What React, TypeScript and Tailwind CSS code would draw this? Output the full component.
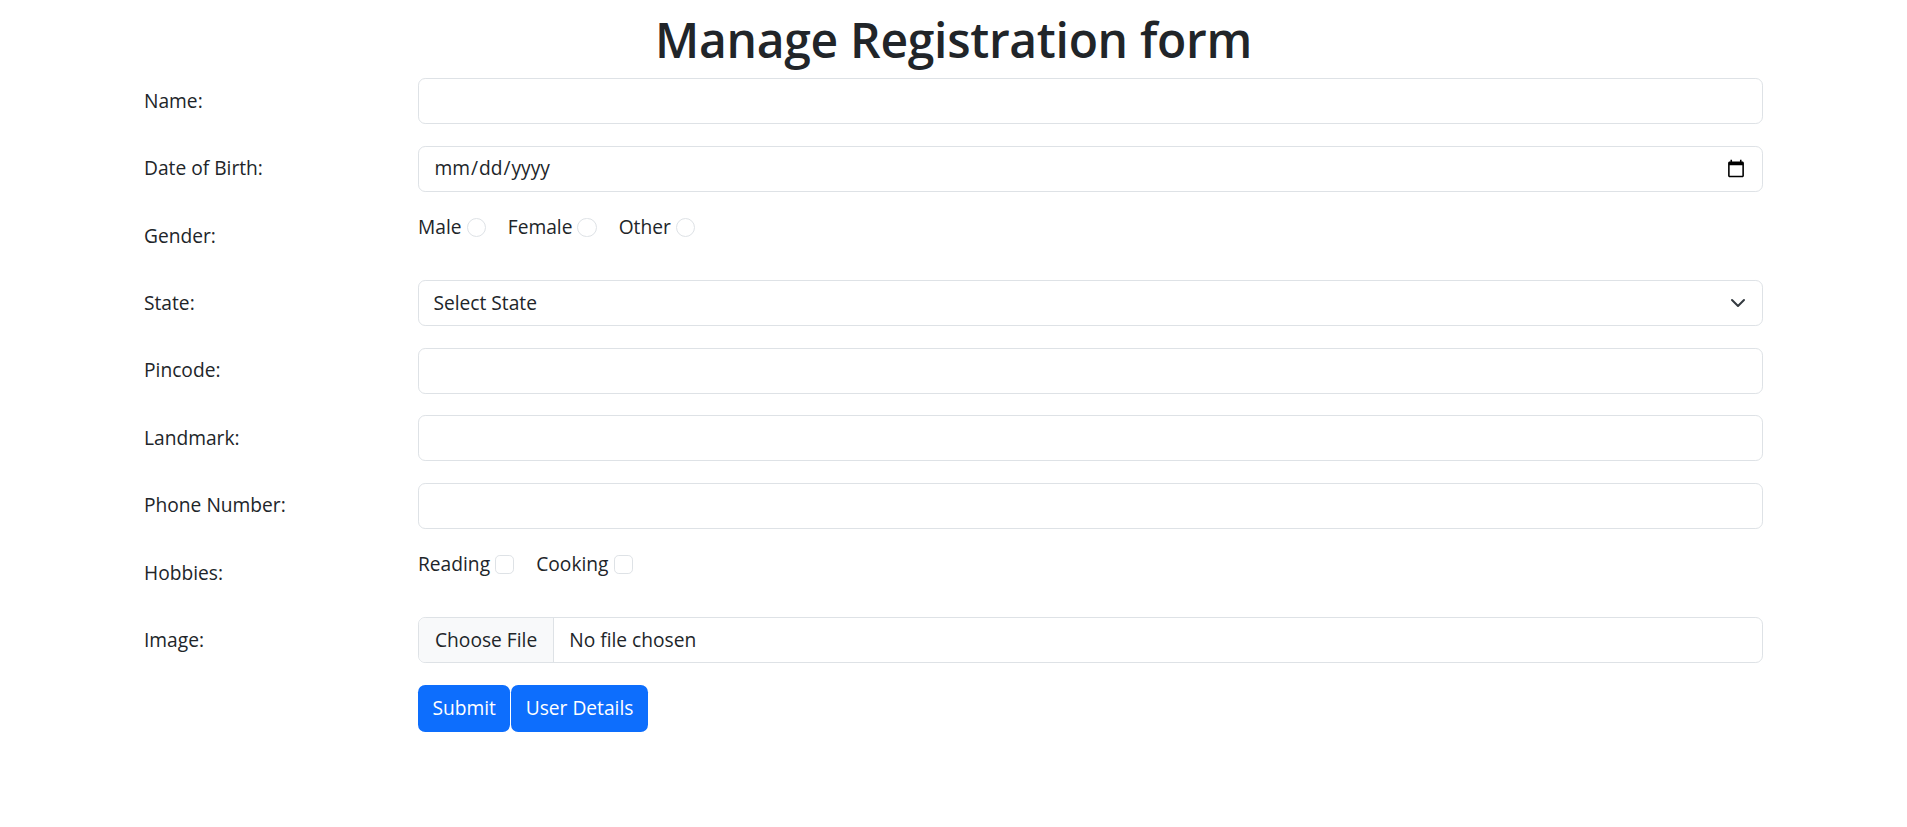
import React from 'react'

const font = { fontFamily: '"Open Sans", "Noto Sans", Arial, sans-serif' }

function Label({ children }: { children: React.ReactNode }) {
  return (
    <label className="w-[274px] shrink-0 pt-[8.4px] pb-[8.4px] text-[19.2px] leading-[28.8px] text-[#212529]">
      {children}
    </label>
  )
}

const inputCls =
  'block w-full h-[46px] rounded-[7.2px] border border-solid border-[#dee2e6] bg-white px-[14.4px] text-[19.2px] leading-[28.8px] text-[#212529] outline-none'

export default function App() {
  return (
    <div className="min-h-screen bg-white text-[#212529]" style={font}>
      <h1 className="pt-[11px] mb-[9.6px] text-center text-[48px] font-semibold leading-[1.2] tracking-[-0.3px] text-[#212529]">
        Manage Registration form
      </h1>

      <form className="mx-[144px] flex flex-col gap-[21.5px]">
        {/* Name */}
        <div className="flex">
          <Label>Name:</Label>
          <input type="text" className={inputCls} />
        </div>

        {/* Date of Birth */}
        <div className="flex">
          <Label>Date of Birth:</Label>
          <input type="date" className={inputCls} />
        </div>

        {/* Gender */}
        <div className="flex">
          <Label>Gender:</Label>
          <div className="flex items-start text-[19.2px] leading-[28.8px]">
            {['Male', 'Female', 'Other'].map((g) => (
              <div key={g} className="flex items-center mr-[22px]">
                <span>{g}</span>
                <input
                  type="radio"
                  name="gender"
                  className="ml-[5px] h-[19.2px] w-[19.2px] appearance-none rounded-full border border-solid border-[#dee2e6] bg-white"
                />
              </div>
            ))}
          </div>
        </div>

        {/* State */}
        <div className="flex">
          <Label>State:</Label>
          <div className="relative w-full">
            <select className={inputCls + ' appearance-none'}>
              <option>Select State</option>
            </select>
            <svg
              className="pointer-events-none absolute right-[17px] top-[17px] h-[12px] w-[16px]"
              viewBox="0 0 16 12"
              fill="none"
              stroke="#343a40"
              strokeWidth="2"
              strokeLinecap="round"
              strokeLinejoin="round"
            >
              <path d="m2 3 6 6 6-6" />
            </svg>
          </div>
        </div>

        {/* Pincode */}
        <div className="flex">
          <Label>Pincode:</Label>
          <input type="text" className={inputCls} />
        </div>

        {/* Landmark */}
        <div className="flex">
          <Label>Landmark:</Label>
          <input type="text" className={inputCls} />
        </div>

        {/* Phone Number */}
        <div className="flex">
          <Label>Phone Number:</Label>
          <input type="text" className={inputCls} />
        </div>

        {/* Hobbies */}
        <div className="flex">
          <Label>Hobbies:</Label>
          <div className="flex items-start text-[19.2px] leading-[28.8px]">
            {['Reading', 'Cooking'].map((h) => (
              <div key={h} className="flex items-center mr-[22px]">
                <span>{h}</span>
                <input
                  type="checkbox"
                  className="ml-[5px] h-[19.2px] w-[19.2px] appearance-none rounded-[4.8px] border border-solid border-[#dee2e6] bg-white"
                />
              </div>
            ))}
          </div>
        </div>

        {/* Image */}
        <div className="flex">
          <Label>Image:</Label>
          <div className="flex w-full h-[46px] overflow-hidden rounded-[7.2px] border border-solid border-[#dee2e6] text-[19.2px] leading-[28.8px]">
            <span className="flex items-center bg-[#f8f9fa] border-r border-solid border-[#dee2e6] px-[16px]">
              Choose File
            </span>
            <span className="flex items-center pl-[15px]">No file chosen</span>
          </div>
        </div>

        {/* Buttons */}
        <div className="flex">
          <div className="w-[274px] shrink-0" />
          <div className="flex gap-[1px]">
            <button
              type="button"
              className="h-[47px] rounded-[7.2px] bg-[#0d6efd] px-[14.4px] text-[19.2px] leading-[28.8px] text-white"
            >
              Submit
            </button>
            <button
              type="button"
              className="h-[47px] rounded-[7.2px] bg-[#0d6efd] px-[14.4px] text-[19.2px] leading-[28.8px] text-white"
            >
              User Details
            </button>
          </div>
        </div>
      </form>
    </div>
  )
}
